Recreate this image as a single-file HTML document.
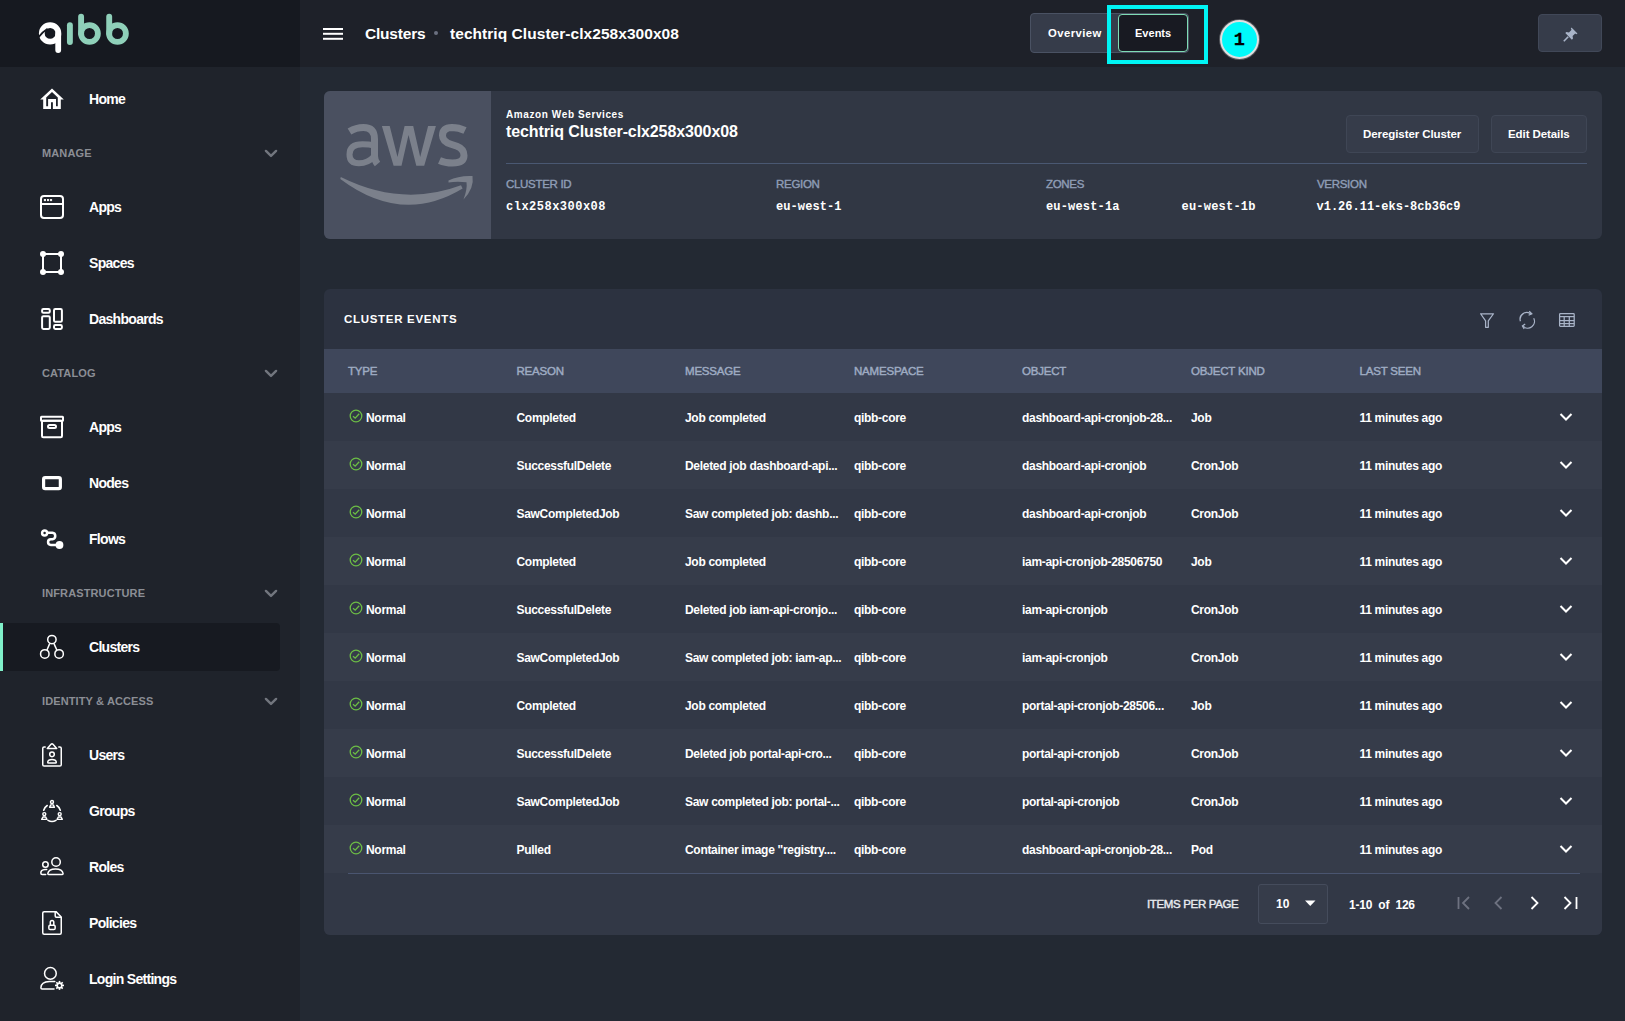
<!DOCTYPE html>
<html><head><meta charset="utf-8"><style>
*{box-sizing:border-box;margin:0;padding:0}
html,body{width:1625px;height:1021px;overflow:hidden;background:#232933;font-family:"Liberation Sans",sans-serif;color:#fff}
#side{position:absolute;left:0;top:0;width:300px;height:1021px;background:#1f232b}
#logo{position:absolute;left:0;top:0;width:300px;height:67px;background:#161920}
#hdr{position:absolute;left:300px;top:0;width:1325px;height:67px;background:#1e2129}
.nav{position:absolute;left:89px;font-weight:bold;font-size:14px;line-height:16px;color:#fff;white-space:nowrap;letter-spacing:-0.7px}
.sec{position:absolute;left:42px;font-weight:bold;font-size:11px;line-height:12px;color:#8b8e95;white-space:nowrap;letter-spacing:0.12px}
.chev{position:absolute;left:263px}
.ico{position:absolute;left:40px;overflow:visible}
.t{position:absolute;white-space:nowrap}
.th{position:absolute;top:365px;font-size:11.5px;line-height:13px;color:#9eabc2;white-space:nowrap;letter-spacing:-0.2px;-webkit-text-stroke:0.45px #9eabc2}
.row{position:absolute;left:324px;width:1278px;height:48px}
.c{position:absolute;top:18px;font-weight:bold;font-size:12px;line-height:14px;color:#fff;white-space:nowrap;letter-spacing:-0.3px}
.lbl{position:absolute;top:178px;font-size:11.5px;line-height:13px;color:#8f9db6;white-space:nowrap;letter-spacing:-0.3px;-webkit-text-stroke:0.4px #8f9db6}
.val{position:absolute;top:200px;font-family:"Liberation Mono",monospace;font-weight:bold;font-size:12px;line-height:14px;color:#fff;white-space:nowrap}
</style></head><body>
<div id="side"><div id="logo"></div></div>
<svg class="t" style="left:0;top:0" width="140" height="67" viewBox="0 0 140 67">
<g fill="none" stroke-linecap="round">
<circle cx="50.1" cy="33.4" r="8.3" stroke="#fff" stroke-width="5.8"/>
<line x1="58.2" y1="34" x2="58.2" y2="50" stroke="#fff" stroke-width="5.8"/>
<line x1="69.9" y1="25.2" x2="69.9" y2="42" stroke="#8fd0b9" stroke-width="5.9"/>
<line x1="81.1" y1="16.7" x2="81.1" y2="33.5" stroke="#8fd0b9" stroke-width="5.9"/>
<circle cx="89.5" cy="33.5" r="8.4" stroke="#8fd0b9" stroke-width="5.8"/>
<line x1="109.2" y1="16.7" x2="109.2" y2="33.5" stroke="#8fd0b9" stroke-width="5.9"/>
<circle cx="117.5" cy="33.5" r="8.4" stroke="#8fd0b9" stroke-width="5.8"/>
</g>
<path d="M37.8 38 Q42 32.3 47.6 28.8" stroke="#161920" stroke-width="1.9" fill="none"/>
</svg>
<div class="t" style="left:0;top:623px;width:280px;height:48px;background:#171a21;border-radius:0 4px 4px 0"></div>
<div class="t" style="left:0;top:623px;width:3px;height:48px;background:#7ff0c9"></div>
<div class="nav" style="top:91px">Home</div>
<svg class="ico" style="top:87px" width="24" height="24" viewBox="0 0 24 24"><path fill="#fff" fill-rule="evenodd" d="M12 1.4 L23.8 12.5 H20.8 V22.1 H3.2 V12.5 H0.2 Z M12 5 L17.8 10.5 V19.3 H16 V12 H8.1 V19.3 H6.2 V10.5 Z M11 15.2 H12.9 V22.1 H11 Z"/></svg>
<div class="sec" style="top:146.5px">MANAGE</div>
<svg class="chev" style="top:148.5px;left:263.5px" width="14" height="10" viewBox="0 0 14 10"><path d="M1.9 1.9 L7 6.9 L12.1 1.9" stroke="#72767e" stroke-width="2.4" fill="none" stroke-linecap="round" stroke-linejoin="round"/></svg>
<div class="nav" style="top:199px">Apps</div>
<svg class="ico" style="top:195px" width="24" height="24" viewBox="0 0 24 24"><rect x="1" y="1" width="22" height="22" rx="3" stroke="#fff" stroke-width="2" fill="none" stroke-linejoin="round" stroke-linecap="round"/><line x1="1" y1="9" x2="23" y2="9" stroke="#fff" stroke-width="2" fill="none" stroke-linejoin="round" stroke-linecap="round"/><rect x="3.9" y="4" width="2.1" height="2.1" fill="#eee"/><rect x="7" y="4" width="2.1" height="2.1" fill="#eee"/><rect x="10" y="4" width="2.1" height="2.1" fill="#eee"/></svg>
<div class="nav" style="top:255px">Spaces</div>
<svg class="ico" style="top:251px" width="24" height="24" viewBox="0 0 24 24"><rect x="3" y="3" width="18" height="18" stroke="#fff" stroke-width="2" fill="none" stroke-linejoin="round" stroke-linecap="round"/><circle cx="3" cy="3" r="3" fill="#fff"/><circle cx="21" cy="3" r="3" fill="#fff"/><circle cx="3" cy="21" r="3" fill="#fff"/><circle cx="21" cy="21" r="3" fill="#fff"/></svg>
<div class="nav" style="top:311px">Dashboards</div>
<svg class="ico" style="top:307px" width="24" height="24" viewBox="0 0 24 24"><rect x="2.1" y="2.1" width="7.7" height="3.6" rx="1.3" stroke="#fff" stroke-width="2" fill="none" stroke-linejoin="round" stroke-linecap="round"/><rect x="2.1" y="9.3" width="7.7" height="12.6" rx="1.3" stroke="#fff" stroke-width="2" fill="none" stroke-linejoin="round" stroke-linecap="round"/><rect x="14" y="2.1" width="7.9" height="12.7" rx="1.3" stroke="#fff" stroke-width="2" fill="none" stroke-linejoin="round" stroke-linecap="round"/><rect x="14" y="18.1" width="7.9" height="3.8" rx="1.3" stroke="#fff" stroke-width="2" fill="none" stroke-linejoin="round" stroke-linecap="round"/></svg>
<div class="sec" style="top:366.5px">CATALOG</div>
<svg class="chev" style="top:368.5px;left:263.5px" width="14" height="10" viewBox="0 0 14 10"><path d="M1.9 1.9 L7 6.9 L12.1 1.9" stroke="#72767e" stroke-width="2.4" fill="none" stroke-linecap="round" stroke-linejoin="round"/></svg>
<div class="nav" style="top:419px">Apps</div>
<svg class="ico" style="top:415px" width="24" height="24" viewBox="0 0 24 24"><rect x="1" y="1.8" width="22" height="4" rx="0.5" stroke="#fff" stroke-width="2" fill="none" stroke-linejoin="round" stroke-linecap="round"/><rect x="2" y="5.8" width="20" height="16.4" rx="1.3" stroke="#fff" stroke-width="2" fill="none" stroke-linejoin="round" stroke-linecap="round"/><rect x="8" y="10" width="8" height="3" rx="1.5" stroke="#fff" stroke-width="2" fill="none" stroke-linejoin="round" stroke-linecap="round"/></svg>
<div class="nav" style="top:475px">Nodes</div>
<svg class="ico" style="top:471px" width="24" height="24" viewBox="0 0 24 24"><rect x="3.6" y="6.55" width="16.75" height="11" rx="1.6" stroke="#fff" stroke-width="3.2" fill="none"/></svg>
<div class="nav" style="top:531px">Flows</div>
<svg class="ico" style="top:527px" width="24" height="24" viewBox="0 0 24 24"><g stroke="#fff" stroke-width="2.5" fill="none"><circle cx="4.6" cy="5.9" r="2.5"/><path d="M7 5.85 H12.4 A3.25 3.25 0 0 1 12.4 12.3 H10.85 A2.8 2.8 0 0 0 10.85 17.9 H17"/></g><circle cx="19.5" cy="18" r="3.9" fill="#fff"/></svg>
<div class="sec" style="top:586.5px">INFRASTRUCTURE</div>
<svg class="chev" style="top:588.5px;left:263.5px" width="14" height="10" viewBox="0 0 14 10"><path d="M1.9 1.9 L7 6.9 L12.1 1.9" stroke="#72767e" stroke-width="2.4" fill="none" stroke-linecap="round" stroke-linejoin="round"/></svg>
<div class="nav" style="top:639px">Clusters</div>
<svg class="ico" style="top:635px" width="24" height="24" viewBox="0 0 24 24"><g stroke="#fff" stroke-width="1.5" fill="none"><circle cx="11.9" cy="4.6" r="4.2"/><circle cx="4.8" cy="18.9" r="4.25"/><circle cx="19.1" cy="18.9" r="4.25"/><line x1="9.8" y1="8.4" x2="7" y2="15"/><line x1="13.9" y1="8.4" x2="16.8" y2="15"/></g></svg>
<div class="sec" style="top:694.5px">IDENTITY &amp; ACCESS</div>
<svg class="chev" style="top:696.5px;left:263.5px" width="14" height="10" viewBox="0 0 14 10"><path d="M1.9 1.9 L7 6.9 L12.1 1.9" stroke="#72767e" stroke-width="2.4" fill="none" stroke-linecap="round" stroke-linejoin="round"/></svg>
<div class="nav" style="top:747px">Users</div>
<svg class="ico" style="top:743px" width="24" height="24" viewBox="0 0 24 24"><g stroke="#fff" stroke-width="1.5" fill="none" stroke-linejoin="round" stroke-linecap="round"><path d="M5.2 4 H4.1 Q2.75 4 2.75 5.3 V21.8 Q2.75 23.1 4.1 23.1 H19.9 Q21.25 23.1 21.25 21.8 V5.3 Q21.25 4 19.9 4 H18.8"/><path d="M7.3 5.4 L11 1.3 Q12 0.4 13 1.3 L16.7 5.4 Z"/><circle cx="12" cy="11.35" r="2.3"/><path d="M7.7 19.2 Q8.2 16.6 12 16.6 Q15.8 16.6 16.3 19.2 Q16.3 20.1 15.4 20.1 H8.6 Q7.7 20.1 7.7 19.2 Z"/></g></svg>
<div class="nav" style="top:803px">Groups</div>
<svg class="ico" style="top:799px" width="24" height="24" viewBox="0 0 24 24"><g stroke="#fff" stroke-width="1.4" fill="none" stroke-linejoin="round"><circle cx="12" cy="3.05" r="1.5"/><path d="M10.6 5.9 H13.4 L14.4 8.3 H9.6 Z"/><circle cx="4.3" cy="15.1" r="1.5"/><path d="M2.9 18 H5.7 L6.9 20.4 H1.7 Z"/><circle cx="19.7" cy="15.1" r="1.5"/><path d="M18.3 18 H21.1 L22.3 20.4 H17.1 Z"/></g><g stroke="#fff" stroke-width="1.6" fill="none" stroke-linecap="round"><path d="M3.7 11.2 Q4.8 8 7.2 6.5"/><path d="M16.8 6.5 Q19.2 8 20.3 11.2"/><path d="M8 21.4 Q12 23.6 16 21.4"/></g></svg>
<div class="nav" style="top:859px">Roles</div>
<svg class="ico" style="top:855px" width="24" height="24" viewBox="0 0 24 24"><g stroke="#fff" stroke-width="1.5" fill="none" stroke-linecap="round"><circle cx="16.05" cy="7" r="4.25"/><path d="M8.6 19.4 Q7.8 19.4 7.8 18.5 Q8.6 13.9 15.5 13.9 Q22.4 13.9 23.1 18.5 Q23.1 19.4 22.3 19.4 Z"/><circle cx="5.45" cy="9.45" r="2.75"/><path d="M6.7 14.5 H5 Q0.8 14.8 0.8 18 Q0.8 19.5 2.3 19.5 H5.7"/></g></svg>
<div class="nav" style="top:915px">Policies</div>
<svg class="ico" style="top:911px" width="24" height="24" viewBox="0 0 24 24"><g stroke="#fff" stroke-width="1.5" fill="none" stroke-linejoin="round"><path d="M4.2 0.65 H16 L21.25 6 V21.7 Q21.25 23.15 19.8 23.15 H4.2 Q2.75 23.15 2.75 21.7 V2.1 Q2.75 0.65 4.2 0.65 Z"/><path d="M15.2 0.8 V5 Q15.2 6.2 16.4 6.2 H21"/><rect x="8.85" y="14.15" width="6.3" height="4.3" rx="1.3"/><path d="M10.3 14 V11.3 A1.75 1.75 0 0 1 13.8 11.3 V14"/></g></svg>
<div class="nav" style="top:971px">Login Settings</div>
<svg class="ico" style="top:967px" width="24" height="24" viewBox="0 0 24 24"><g stroke="#fff" stroke-width="1.5" fill="none" stroke-linecap="round"><circle cx="10.4" cy="6.45" r="5.85"/><path d="M14.8 14.5 H9.5 Q1 14.8 0.9 20.8 Q0.9 21.9 2 21.9 H14"/></g><g transform="translate(19.5,18.4)"><circle r="3.1" fill="#fff"/><g stroke="#fff" stroke-width="1.6"><line x1="0" y1="-4.5" x2="0" y2="4.5"/><line x1="-4.5" y1="0" x2="4.5" y2="0"/><line x1="-3.2" y1="-3.2" x2="3.2" y2="3.2"/><line x1="-3.2" y1="3.2" x2="3.2" y2="-3.2"/></g><circle r="1.5" fill="#1f232b"/></g></svg>
<div id="hdr"></div>
<svg class="t" style="left:323px;top:27px" width="20" height="13" viewBox="0 0 20 13"><g stroke="#fff" stroke-width="2"><line x1="0" y1="2" x2="20" y2="2"/><line x1="0" y1="6.8" x2="20" y2="6.8"/><line x1="0" y1="11.8" x2="20" y2="11.8"/></g></svg>
<div class="t" id="bc1" style="left:365px;top:25px;font-weight:bold;font-size:15.5px;line-height:18px;letter-spacing:-0.2px">Clusters</div>
<div class="t" style="left:434px;top:31px;width:4px;height:4px;border-radius:2px;background:#6b7080"></div>
<div class="t" id="bc2" style="left:450px;top:25px;font-weight:bold;font-size:15.5px;line-height:18px;letter-spacing:0.05px">techtriq Cluster-clx258x300x08</div>
<div class="t" style="left:1030px;top:13px;width:159px;height:40px;background:#363c4a;border:1px solid #4a5263;border-radius:4px"></div>
<div class="t" id="ov" style="left:1048px;top:25.6px;font-weight:bold;font-size:11.3px;line-height:14px;color:#fff;letter-spacing:0.45px">Overview</div>
<div class="t" style="left:1118px;top:14px;width:70px;height:38px;background:#181a22;border:1px solid #7fdcb5;border-radius:4px"></div>
<div class="t" id="ev" style="left:1135px;top:25.6px;font-weight:bold;font-size:11px;line-height:14px;color:#fff;letter-spacing:0.02px">Events</div>
<div class="t" style="left:1107px;top:5px;width:101px;height:59px;border:4px solid #00f5f5"></div>
<div class="t" style="left:1219.5px;top:19.5px;width:39.5px;height:39.5px;border-radius:50%;background:#00fafa;border:2px solid #e0e0e0;box-shadow:0 0 0 1px #55585e"></div>
<div class="t" style="left:1219.5px;top:30.5px;width:39.5px;text-align:center;font-family:'Liberation Mono',monospace;font-weight:bold;font-size:18.5px;-webkit-text-stroke:0.3px #000;line-height:20px;color:#000">1</div>
<div class="t" style="left:1538px;top:14px;width:64px;height:38px;background:#363c4a;border:1px solid #414858;border-radius:4px"></div>
<svg class="t" style="left:1563px;top:27px" width="15" height="15" viewBox="0 0 15 15"><g fill="#a9b4c8"><path d="M8.5 0.5 L14.5 6.5 L13.3 7.2 L12.2 6.4 L9.6 9 L10 11.6 L8.9 12.7 L2.3 6.1 L3.4 5 L6 5.4 L8.6 2.8 L7.8 1.7 Z"/></g><line x1="5.2" y1="9.8" x2="0.8" y2="14.2" stroke="#a9b4c8" stroke-width="1.6"/></svg>
<div class="t" style="left:324px;top:91px;width:1278px;height:148px;background:#313744;border-radius:6px;overflow:hidden"><div style="position:absolute;left:0;top:0;width:167px;height:148px;background:#4a5060"></div></div>
<svg class="t" style="left:324px;top:91px" width="167" height="148" viewBox="0 0 167 148">
<g fill="none" stroke="#7b808b" stroke-width="7">
<path d="M25.5 40.5 Q32 36.5 39.5 36.5 Q50.5 36.5 50.5 48 V65 Q50.5 69.5 53.5 73"/>
<path d="M50.5 54.5 Q45 53.3 38.5 53.3 Q25.5 53.3 25.5 63.5 Q25.5 72.3 35 72.3 Q44 72.3 50.5 65" stroke-width="6"/>
<path d="M141 39.5 Q135 36.5 128 36.5 Q118.5 36.8 118.5 44.5 Q118.5 50.5 127 53.3 L133 55.3 Q140 58 140 64.5 Q140 72 128.5 72 Q121 72 115.5 69.5"/>
</g>
<path d="M57.9 35 H65.7 L73.5 66 L80.6 35 H89.2 L96.2 66 L104.1 35 H111.9 L100.2 74.7 H92.3 L84.5 44 L77.5 74.7 H69.6 Z" fill="#7b808b"/>
<path d="M16.8 86 Q78 116.5 137 94.3 L138.6 97.6 Q78 134.3 16.3 88 Z" fill="#7b808b"/>
<path d="M124.5 89.5 Q135 84.3 148.5 85 Q150.5 97 139.5 108.5 Q143.5 98 142.5 91.3 Q133 90 124.5 91.5 Z" fill="#7b808b"/>
</svg>
<div class="t" id="aws1" style="left:506px;top:109px;font-weight:bold;font-size:10px;line-height:11px;letter-spacing:0.6px">Amazon Web Services</div>
<div class="t" id="aws2" style="left:506px;top:123px;font-weight:bold;font-size:16px;line-height:17px;letter-spacing:-0.1px">techtriq Cluster-clx258x300x08</div>
<div class="t" style="left:1346px;top:115px;width:133px;height:38px;background:#363c4a;border:1px solid #3f4655;border-radius:4px"></div>
<div class="t" id="dereg" style="left:1363px;top:127px;font-weight:bold;font-size:11.5px;line-height:14px;letter-spacing:-0.08px">Deregister Cluster</div>
<div class="t" style="left:1491px;top:115px;width:96px;height:38px;background:#363c4a;border:1px solid #3f4655;border-radius:4px"></div>
<div class="t" id="edit" style="left:1508px;top:127px;font-weight:bold;font-size:11.5px;line-height:14px;letter-spacing:-0.08px">Edit Details</div>
<div class="t" style="left:506px;top:163px;width:1081px;height:1px;background:#4a5872"></div>
<div class="lbl" style="left:506px">CLUSTER ID</div>
<div class="lbl" style="left:776px">REGION</div>
<div class="lbl" style="left:1046px">ZONES</div>
<div class="lbl" style="left:1317px">VERSION</div>
<div class="val" style="left:506px;letter-spacing:0.49px">clx258x300x08</div>
<div class="val" style="left:776px;letter-spacing:0.09px">eu-west-1</div>
<div class="val" style="left:1046px;letter-spacing:0.17px">eu-west-1a</div>
<div class="val" style="left:1181.5px;letter-spacing:0.22px">eu-west-1b</div>
<div class="val" style="left:1316.5px;letter-spacing:0px">v1.26.11-eks-8cb36c9</div>
<div class="t" style="left:324px;top:289px;width:1278px;height:646px;background:#2c3240;border-radius:6px;overflow:hidden"><div style="position:absolute;left:0;top:584px;width:1278px;height:62px;background:#323846"></div></div>
<div class="t" id="ce" style="left:344px;top:313px;font-weight:bold;font-size:11.5px;line-height:13px;letter-spacing:0.7px">CLUSTER EVENTS</div>
<svg class="t" style="left:1479px;top:312px" width="16" height="17" viewBox="0 0 16 17"><path d="M1.6 1.75 H14.5 L9.3 8.8 V15.3 H6.6 V8.8 Z" stroke="#a9b4c8" stroke-width="1.25" fill="none" stroke-linejoin="round"/></svg>
<svg class="t" style="left:1518px;top:310px" width="18" height="20" viewBox="0 0 18 20"><path d="M2.4 11.2 A6.7 6.7 0 0 1 13.2 4.2" stroke="#a9b4c8" stroke-width="1.25" fill="none"/><path d="M15.7 8.3 A6.7 6.7 0 0 1 5.2 16.3" stroke="#a9b4c8" stroke-width="1.25" fill="none"/><path d="M11.2 1.2 L13.8 3.8 L10.6 5.2" stroke="#a9b4c8" stroke-width="1.25" fill="none"/><path d="M7.2 13.9 L4.4 16 L6.2 19" stroke="#a9b4c8" stroke-width="1.25" fill="none"/></svg>
<svg class="t" style="left:1558px;top:312px" width="18" height="16" viewBox="0 0 18 16"><rect x="1.6" y="1.7" width="14.6" height="12.7" rx="0.8" stroke="#a9b4c8" stroke-width="1.25" fill="none"/><line x1="1.6" y1="4.6" x2="16.2" y2="4.6" stroke="#a9b4c8" stroke-width="1.25" fill="none"/><line x1="1.6" y1="8.6" x2="16.2" y2="8.6" stroke="#a9b4c8" stroke-width="1.25" fill="none"/><line x1="1.6" y1="11.6" x2="16.2" y2="11.6" stroke="#a9b4c8" stroke-width="1.25" fill="none"/><line x1="6.2" y1="4.6" x2="6.2" y2="14.4" stroke="#a9b4c8" stroke-width="1.25" fill="none"/><line x1="11.3" y1="4.6" x2="11.3" y2="14.4" stroke="#a9b4c8" stroke-width="1.25" fill="none"/></svg>
<div class="t" style="left:324px;top:349px;width:1278px;height:44px;background:#3f475b"></div>
<div class="th" style="left:348px">TYPE</div>
<div class="th" style="left:516.5px">REASON</div>
<div class="th" style="left:685px">MESSAGE</div>
<div class="th" style="left:854px">NAMESPACE</div>
<div class="th" style="left:1022px">OBJECT</div>
<div class="th" style="left:1191px">OBJECT KIND</div>
<div class="th" style="left:1359.5px">LAST SEEN</div>
<div class="row" style="top:393px;background:#323846">
<svg style="position:absolute;left:25px;top:16px" width="14" height="14" viewBox="0 0 14 14"><circle cx="7" cy="7" r="5.8" stroke="#6cbd45" stroke-width="1.3" fill="none"/><path d="M4 7.2 L6.2 9.2 L10.2 4.8" stroke="#6cbd45" stroke-width="1.3" fill="none"/></svg>
<div class="c" style="left:42px">Normal</div>
<div class="c" style="left:192.5px">Completed</div>
<div class="c" style="left:361px">Job completed</div>
<div class="c" style="left:530px">qibb-core</div>
<div class="c" style="left:698px">dashboard-api-cronjob-28...</div>
<div class="c" style="left:867px">Job</div>
<div class="c" style="left:1035.5px">11 minutes ago</div>
<svg style="position:absolute;left:1235px;top:19px" width="14" height="10" viewBox="0 0 14 10"><path d="M1.5 2 L7 7.5 L12.5 2" stroke="#fff" stroke-width="2" fill="none"/></svg>
</div>
<div class="row" style="top:441px;background:#363c4a">
<svg style="position:absolute;left:25px;top:16px" width="14" height="14" viewBox="0 0 14 14"><circle cx="7" cy="7" r="5.8" stroke="#6cbd45" stroke-width="1.3" fill="none"/><path d="M4 7.2 L6.2 9.2 L10.2 4.8" stroke="#6cbd45" stroke-width="1.3" fill="none"/></svg>
<div class="c" style="left:42px">Normal</div>
<div class="c" style="left:192.5px">SuccessfulDelete</div>
<div class="c" style="left:361px">Deleted job dashboard-api...</div>
<div class="c" style="left:530px">qibb-core</div>
<div class="c" style="left:698px">dashboard-api-cronjob</div>
<div class="c" style="left:867px">CronJob</div>
<div class="c" style="left:1035.5px">11 minutes ago</div>
<svg style="position:absolute;left:1235px;top:19px" width="14" height="10" viewBox="0 0 14 10"><path d="M1.5 2 L7 7.5 L12.5 2" stroke="#fff" stroke-width="2" fill="none"/></svg>
</div>
<div class="row" style="top:489px;background:#323846">
<svg style="position:absolute;left:25px;top:16px" width="14" height="14" viewBox="0 0 14 14"><circle cx="7" cy="7" r="5.8" stroke="#6cbd45" stroke-width="1.3" fill="none"/><path d="M4 7.2 L6.2 9.2 L10.2 4.8" stroke="#6cbd45" stroke-width="1.3" fill="none"/></svg>
<div class="c" style="left:42px">Normal</div>
<div class="c" style="left:192.5px">SawCompletedJob</div>
<div class="c" style="left:361px">Saw completed job: dashb...</div>
<div class="c" style="left:530px">qibb-core</div>
<div class="c" style="left:698px">dashboard-api-cronjob</div>
<div class="c" style="left:867px">CronJob</div>
<div class="c" style="left:1035.5px">11 minutes ago</div>
<svg style="position:absolute;left:1235px;top:19px" width="14" height="10" viewBox="0 0 14 10"><path d="M1.5 2 L7 7.5 L12.5 2" stroke="#fff" stroke-width="2" fill="none"/></svg>
</div>
<div class="row" style="top:537px;background:#363c4a">
<svg style="position:absolute;left:25px;top:16px" width="14" height="14" viewBox="0 0 14 14"><circle cx="7" cy="7" r="5.8" stroke="#6cbd45" stroke-width="1.3" fill="none"/><path d="M4 7.2 L6.2 9.2 L10.2 4.8" stroke="#6cbd45" stroke-width="1.3" fill="none"/></svg>
<div class="c" style="left:42px">Normal</div>
<div class="c" style="left:192.5px">Completed</div>
<div class="c" style="left:361px">Job completed</div>
<div class="c" style="left:530px">qibb-core</div>
<div class="c" style="left:698px">iam-api-cronjob-28506750</div>
<div class="c" style="left:867px">Job</div>
<div class="c" style="left:1035.5px">11 minutes ago</div>
<svg style="position:absolute;left:1235px;top:19px" width="14" height="10" viewBox="0 0 14 10"><path d="M1.5 2 L7 7.5 L12.5 2" stroke="#fff" stroke-width="2" fill="none"/></svg>
</div>
<div class="row" style="top:585px;background:#323846">
<svg style="position:absolute;left:25px;top:16px" width="14" height="14" viewBox="0 0 14 14"><circle cx="7" cy="7" r="5.8" stroke="#6cbd45" stroke-width="1.3" fill="none"/><path d="M4 7.2 L6.2 9.2 L10.2 4.8" stroke="#6cbd45" stroke-width="1.3" fill="none"/></svg>
<div class="c" style="left:42px">Normal</div>
<div class="c" style="left:192.5px">SuccessfulDelete</div>
<div class="c" style="left:361px">Deleted job iam-api-cronjo...</div>
<div class="c" style="left:530px">qibb-core</div>
<div class="c" style="left:698px">iam-api-cronjob</div>
<div class="c" style="left:867px">CronJob</div>
<div class="c" style="left:1035.5px">11 minutes ago</div>
<svg style="position:absolute;left:1235px;top:19px" width="14" height="10" viewBox="0 0 14 10"><path d="M1.5 2 L7 7.5 L12.5 2" stroke="#fff" stroke-width="2" fill="none"/></svg>
</div>
<div class="row" style="top:633px;background:#363c4a">
<svg style="position:absolute;left:25px;top:16px" width="14" height="14" viewBox="0 0 14 14"><circle cx="7" cy="7" r="5.8" stroke="#6cbd45" stroke-width="1.3" fill="none"/><path d="M4 7.2 L6.2 9.2 L10.2 4.8" stroke="#6cbd45" stroke-width="1.3" fill="none"/></svg>
<div class="c" style="left:42px">Normal</div>
<div class="c" style="left:192.5px">SawCompletedJob</div>
<div class="c" style="left:361px">Saw completed job: iam-ap...</div>
<div class="c" style="left:530px">qibb-core</div>
<div class="c" style="left:698px">iam-api-cronjob</div>
<div class="c" style="left:867px">CronJob</div>
<div class="c" style="left:1035.5px">11 minutes ago</div>
<svg style="position:absolute;left:1235px;top:19px" width="14" height="10" viewBox="0 0 14 10"><path d="M1.5 2 L7 7.5 L12.5 2" stroke="#fff" stroke-width="2" fill="none"/></svg>
</div>
<div class="row" style="top:681px;background:#323846">
<svg style="position:absolute;left:25px;top:16px" width="14" height="14" viewBox="0 0 14 14"><circle cx="7" cy="7" r="5.8" stroke="#6cbd45" stroke-width="1.3" fill="none"/><path d="M4 7.2 L6.2 9.2 L10.2 4.8" stroke="#6cbd45" stroke-width="1.3" fill="none"/></svg>
<div class="c" style="left:42px">Normal</div>
<div class="c" style="left:192.5px">Completed</div>
<div class="c" style="left:361px">Job completed</div>
<div class="c" style="left:530px">qibb-core</div>
<div class="c" style="left:698px">portal-api-cronjob-28506...</div>
<div class="c" style="left:867px">Job</div>
<div class="c" style="left:1035.5px">11 minutes ago</div>
<svg style="position:absolute;left:1235px;top:19px" width="14" height="10" viewBox="0 0 14 10"><path d="M1.5 2 L7 7.5 L12.5 2" stroke="#fff" stroke-width="2" fill="none"/></svg>
</div>
<div class="row" style="top:729px;background:#363c4a">
<svg style="position:absolute;left:25px;top:16px" width="14" height="14" viewBox="0 0 14 14"><circle cx="7" cy="7" r="5.8" stroke="#6cbd45" stroke-width="1.3" fill="none"/><path d="M4 7.2 L6.2 9.2 L10.2 4.8" stroke="#6cbd45" stroke-width="1.3" fill="none"/></svg>
<div class="c" style="left:42px">Normal</div>
<div class="c" style="left:192.5px">SuccessfulDelete</div>
<div class="c" style="left:361px">Deleted job portal-api-cro...</div>
<div class="c" style="left:530px">qibb-core</div>
<div class="c" style="left:698px">portal-api-cronjob</div>
<div class="c" style="left:867px">CronJob</div>
<div class="c" style="left:1035.5px">11 minutes ago</div>
<svg style="position:absolute;left:1235px;top:19px" width="14" height="10" viewBox="0 0 14 10"><path d="M1.5 2 L7 7.5 L12.5 2" stroke="#fff" stroke-width="2" fill="none"/></svg>
</div>
<div class="row" style="top:777px;background:#323846">
<svg style="position:absolute;left:25px;top:16px" width="14" height="14" viewBox="0 0 14 14"><circle cx="7" cy="7" r="5.8" stroke="#6cbd45" stroke-width="1.3" fill="none"/><path d="M4 7.2 L6.2 9.2 L10.2 4.8" stroke="#6cbd45" stroke-width="1.3" fill="none"/></svg>
<div class="c" style="left:42px">Normal</div>
<div class="c" style="left:192.5px">SawCompletedJob</div>
<div class="c" style="left:361px">Saw completed job: portal-...</div>
<div class="c" style="left:530px">qibb-core</div>
<div class="c" style="left:698px">portal-api-cronjob</div>
<div class="c" style="left:867px">CronJob</div>
<div class="c" style="left:1035.5px">11 minutes ago</div>
<svg style="position:absolute;left:1235px;top:19px" width="14" height="10" viewBox="0 0 14 10"><path d="M1.5 2 L7 7.5 L12.5 2" stroke="#fff" stroke-width="2" fill="none"/></svg>
</div>
<div class="row" style="top:825px;background:#363c4a">
<svg style="position:absolute;left:25px;top:16px" width="14" height="14" viewBox="0 0 14 14"><circle cx="7" cy="7" r="5.8" stroke="#6cbd45" stroke-width="1.3" fill="none"/><path d="M4 7.2 L6.2 9.2 L10.2 4.8" stroke="#6cbd45" stroke-width="1.3" fill="none"/></svg>
<div class="c" style="left:42px">Normal</div>
<div class="c" style="left:192.5px">Pulled</div>
<div class="c" style="left:361px">Container image "registry....</div>
<div class="c" style="left:530px">qibb-core</div>
<div class="c" style="left:698px">dashboard-api-cronjob-28...</div>
<div class="c" style="left:867px">Pod</div>
<div class="c" style="left:1035.5px">11 minutes ago</div>
<svg style="position:absolute;left:1235px;top:19px" width="14" height="10" viewBox="0 0 14 10"><path d="M1.5 2 L7 7.5 L12.5 2" stroke="#fff" stroke-width="2" fill="none"/></svg>
</div>
<div class="t" style="left:348px;top:873px;width:1232px;height:1px;background:#4a5570"></div>
<div class="t" id="ipp" style="left:1147px;top:898px;font-size:11.5px;line-height:13px;color:#e6e8ec;letter-spacing:-0.35px;-webkit-text-stroke:0.4px #eceef2">ITEMS PER PAGE</div>
<div class="t" style="left:1258px;top:884px;width:70px;height:40px;background:#363c4a;border:1px solid #454c5c;border-radius:3px"></div>
<div class="t" style="left:1276px;top:897px;font-weight:bold;font-size:12px;line-height:14px">10</div>
<svg class="t" style="left:1305px;top:900px" width="11" height="7" viewBox="0 0 11 7"><path d="M0 0.5 H10.5 L5.25 6 Z" fill="#fff"/></svg>
<div class="t" id="pg" style="left:1349px;top:897.5px;font-weight:bold;font-size:12px;line-height:14px;word-spacing:3px;letter-spacing:-0.2px">1-10 of 126</div>
<svg class="t" style="left:1455px;top:895px" width="130" height="16" viewBox="0 0 130 16"><g stroke="#6e7280" stroke-width="1.8" fill="none"><line x1="3.5" y1="2" x2="3.5" y2="14"/><path d="M14 2 L8 8 L14 14"/><path d="M46.5 2 L40.5 8 L46.5 14"/></g><g stroke="#fff" stroke-width="1.8" fill="none"><path d="M76.5 2 L82.5 8 L76.5 14"/><path d="M109.5 2 L115.5 8 L109.5 14"/><line x1="121.5" y1="2" x2="121.5" y2="14"/></g></svg>
</body></html>
